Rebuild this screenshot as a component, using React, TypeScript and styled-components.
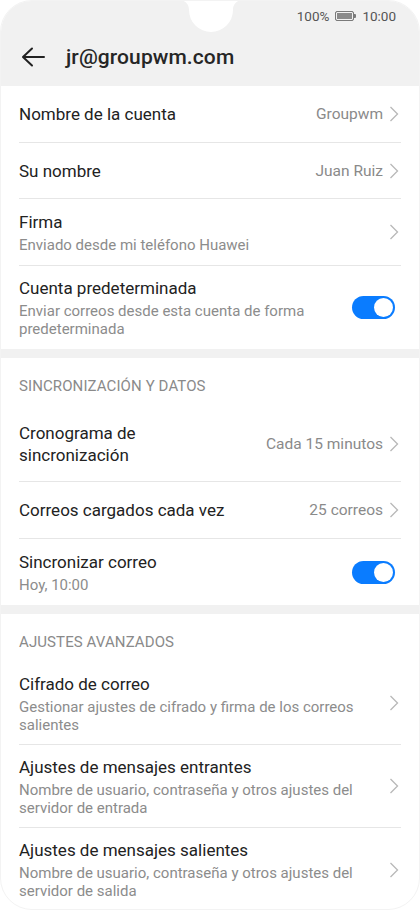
import React from "react";
import styled, { createGlobalStyle } from "styled-components";

const Global = createGlobalStyle`
  html, body { margin: 0; padding: 0; background: #ffffff; }
  body { font-family: Roboto, "Noto Sans", "Liberation Sans", sans-serif; -webkit-font-smoothing: antialiased; }
  * { box-sizing: border-box; }
`;

const Screen = styled.div`
  position: relative;
  width: 420px;
  height: 910px;
  overflow: hidden;
  background: #ffffff;
  border-radius: 32px;
  border: 1px solid #f3f3f3;
  display: flex;
  flex-direction: column;
`;

const Top = styled.header`
  position: relative;
  background: #f1f1f1;
  height: 85px;
  flex: none;
  display: flex;
  flex-direction: column;
`;

const Notch = styled.svg`
  position: absolute;
  left: 177px;
  top: -1px;
  width: 66px;
  height: 34px;
`;

const StatusBar = styled.div`
  height: 30px;
  display: flex;
  align-items: center;
  justify-content: flex-end;
  padding-right: 23px;
  gap: 5px;
  font-size: 13.5px;
  color: #555555;
`;

const Battery = styled.span`
  position: relative;
  width: 19px;
  height: 10px;
  border: 1px solid #7a7a7a;
  border-radius: 2px;
  background: #8a8a8a;
  box-shadow: inset 0 0 0 1px #f1f1f1;
  margin: 0 3px 0 1px;
  &::after {
    content: "";
    position: absolute;
    right: -3px;
    top: 2px;
    width: 2px;
    height: 4px;
    background: #7a7a7a;
    border-radius: 0 1px 1px 0;
  }
`;

const TitleBar = styled.div`
  flex: 1;
  display: flex;
  align-items: center;
  padding-left: 20px;
  gap: 21px;
  padding-bottom: 4px;
`;

const Title = styled.h1`
  margin: 0;
  font-size: 21px;
  font-weight: 500;
  color: #262626;
  letter-spacing: 0.1px;
`;

const Band = styled.div`
  height: 9px;
  background: #f1f1f1;
  flex: none;
`;

const SectionHeader = styled.div`
  height: 48px;
  flex: none;
  padding: 18px 18px 0;
  font-size: 15px;
  line-height: 20px;
  color: #8a8a8a;
  font-weight: 400;
  letter-spacing: 0.1px;
`;

const Row = styled.div<{ $h: number; $last?: boolean }>`
  display: flex;
  align-items: center;
  height: ${(p) => p.$h}px;
  margin: 0 18px;
  border-bottom: ${(p) => (p.$last ? "none" : "1px solid #e6e6e6")};
  gap: 12px;
  flex: none;
`;

const Texts = styled.div`
  flex: 1;
  min-width: 0;
`;

const Label = styled.div`
  font-size: 17px;
  line-height: 22px;
  color: #222222;
`;

const Sub = styled.div`
  margin-top: 3px;
  font-size: 15px;
  line-height: 18px;
  color: #8c8c8c;
`;

const Value = styled.span`
  font-size: 15.5px;
  color: #8a8a8a;
  white-space: nowrap;
`;

const Trail = styled.div`
  display: flex;
  align-items: center;
  gap: 6px;
  flex: none;
`;

const Toggle = styled.div`
  width: 43px;
  height: 23px;
  border-radius: 12px;
  background: #0a7cff;
  position: relative;
  flex: none;
  margin-right: 6px;
  &::after {
    content: "";
    position: absolute;
    right: 2px;
    top: 2px;
    width: 19px;
    height: 19px;
    border-radius: 50%;
    background: #ffffff;
  }
`;

const Chevron = () => (
  <svg width="10" height="16" viewBox="0 0 10 16" style={{ flex: "none", marginRight: 2 }}>
    <path d="M1.5 1 L8.5 8 L1.5 15" fill="none" stroke="#b8b8b8" strokeWidth="1.3" />
  </svg>
);

const BackArrow = () => (
  <svg width="24" height="20" viewBox="0 0 24 20">
    <path d="M23 10 H2.5 M11 1.5 L2 10 L11 18.5" fill="none" stroke="#222" strokeWidth="2" strokeLinecap="round" strokeLinejoin="round" />
  </svg>
);

type Item = {
  label: React.ReactNode;
  sub?: React.ReactNode;
  value?: string;
  kind: "chev" | "toggle";
  h: number;
  last?: boolean;
};

const ItemRow = ({ label, sub, value, kind, h, last }: Item) => (
  <Row $h={h} $last={last}>
    <Texts>
      <Label>{label}</Label>
      {sub && <Sub>{sub}</Sub>}
    </Texts>
    {kind === "toggle" ? (
      <Toggle />
    ) : (
      <Trail>
        {value && <Value>{value}</Value>}
        <Chevron />
      </Trail>
    )}
  </Row>
);

export default function App() {
  return (
    <>
      <Global />
      <Screen>
        <Top>
          <Notch viewBox="0 0 66 34">
            <path d="M0 0 H66 C60 0 55 3 55 10 A22 22 0 0 1 11 10 C11 3 6 0 0 0 Z" fill="#ffffff" />
          </Notch>
          <StatusBar>
            <span>100%</span>
            <Battery />
            <span>10:00</span>
          </StatusBar>
          <TitleBar>
            <BackArrow />
            <Title>jr@groupwm.com</Title>
          </TitleBar>
        </Top>

        <ItemRow label="Nombre de la cuenta" value="Groupwm" kind="chev" h={57} />
        <ItemRow label="Su nombre" value="Juan Ruiz" kind="chev" h={56} />
        <ItemRow label="Firma" sub="Enviado desde mi teléfono Huawei" kind="chev" h={67} />
        <ItemRow
          label="Cuenta predeterminada"
          sub={<>Enviar correos desde esta cuenta de forma<br />predeterminada</>}
          kind="toggle"
          h={83}
          last
        />
        <Band />
        <SectionHeader>SINCRONIZACIÓN Y DATOS</SectionHeader>
        <ItemRow label={<>Cronograma de<br />sincronización</>} value="Cada 15 minutos" kind="chev" h={76} />
        <ItemRow label="Correos cargados cada vez" value="25 correos" kind="chev" h={57} />
        <ItemRow label="Sincronizar correo" sub="Hoy, 10:00" kind="toggle" h={66} last />
        <Band />
        <SectionHeader>AJUSTES AVANZADOS</SectionHeader>
        <ItemRow
          label="Cifrado de correo"
          sub={<>Gestionar ajustes de cifrado y firma de los correos<br />salientes</>}
          kind="chev"
          h={83}
        />
        <ItemRow
          label="Ajustes de mensajes entrantes"
          sub={<>Nombre de usuario, contraseña y otros ajustes del<br />servidor de entrada</>}
          kind="chev"
          h={83}
        />
        <ItemRow
          label="Ajustes de mensajes salientes"
          sub={<>Nombre de usuario, contraseña y otros ajustes del<br />servidor de salida</>}
          kind="chev"
          h={83}
          last
        />
      </Screen>
    </>
  );
}
